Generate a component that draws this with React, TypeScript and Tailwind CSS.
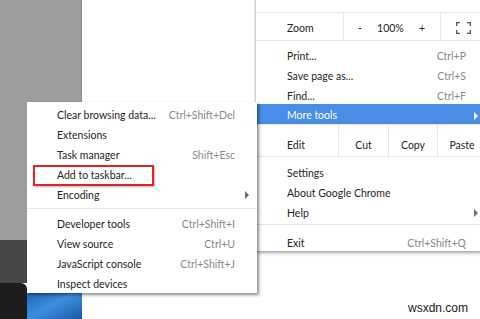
import React from "react";

const font = { fontFamily: "Lato, 'Noto Sans', sans-serif" };

const Arrow = ({ white = false }: { white?: boolean }) => (
  <span
    className={`inline-block w-0 h-0 border-y-[4px] border-y-transparent border-l-[4px] ${
      white ? "border-l-white" : "border-l-[#707070]"
    }`}
  />
);

type Item = { label: string; shortcut?: string; arrow?: boolean };

const subTop: Item[] = [
  { label: "Clear browsing data...", shortcut: "Ctrl+Shift+Del" },
  { label: "Extensions" },
  { label: "Task manager", shortcut: "Shift+Esc" },
  { label: "Add to taskbar..." },
  { label: "Encoding", arrow: true },
];

const subBottom: Item[] = [
  { label: "Developer tools", shortcut: "Ctrl+Shift+I" },
  { label: "View source", shortcut: "Ctrl+U" },
  { label: "JavaScript console", shortcut: "Ctrl+Shift+J" },
  { label: "Inspect devices" },
];

const SubRow = ({ item }: { item: Item }) => (
  <div className="h-[20px] flex items-center justify-between pl-[30px] pr-[22px] pt-[4px] relative">
    <span>{item.label}</span>
    {item.shortcut && <span className="text-[#8a8a8a]">{item.shortcut}</span>}
    {item.arrow && (
      <span className="absolute right-[8px] top-[7px] flex">
        <Arrow />
      </span>
    )}
  </div>
);

const MainRow = ({ item }: { item: Item }) => (
  <div className="h-[20px] flex items-center justify-between pl-[31px] pr-[20px] pt-[6px] relative">
    <span>{item.label}</span>
    {item.shortcut && <span className="text-[#8a8a8a]">{item.shortcut}</span>}
    {item.arrow && (
      <span className="absolute right-[8px] top-[8px] flex">
        <Arrow />
      </span>
    )}
  </div>
);

const FullscreenIcon = () => (
  <svg width="15" height="12" viewBox="0 0 15 12" fill="none" stroke="#555" strokeWidth="1.3">
    <path d="M0.7 4V0.7H4" />
    <path d="M11 0.7H14.3V4" />
    <path d="M14.3 8V11.3H11" />
    <path d="M4 11.3H0.7V8" />
  </svg>
);

const App: React.FC = () => {
  return (
    <div
      className="relative w-[480px] h-[319px] overflow-hidden bg-white flex text-[10.5px] text-[#262626]"
      style={font}
    >
      {/* background page */}
      <div className="w-[82px] flex flex-col">
        <div className="h-[240px] bg-[#9e9e9e] border-r border-[#8c8c8c]" />
        <div className="h-[43px] bg-[#474747]" />
        <div className="flex-1 flex">
          <div className="w-[27px] bg-[#1d1d1d] rounded-tr-[6px]" />
          <div className="flex-1 bg-gradient-to-br from-[#1e5fb4] via-[#3d8fe0] to-[#165aa8] mt-[6px]" />
        </div>
      </div>
      <div className="flex-1 flex items-end justify-end pr-[12px] pb-[2px]">
        <span className="text-[12px] text-[#1a1a1a]" style={{ fontFamily: "'Liberation Sans', Arial, sans-serif" }}>
          wsxdn.com
        </span>
      </div>

      {/* main chrome menu */}
      <div className="absolute left-[255px] top-[-10px] w-[231px] bg-white border-l border-[#cfcfcf] shadow-[1px_2px_3px_rgba(0,0,0,0.35)]">
        <div className="h-[20px] flex items-end pl-[31px] pb-[9px]">
          <span className="leading-none">Downloads</span>
        </div>
        <div className="h-px bg-[#e6e6e6] mt-[2px]" />
        <div className="h-[28px] flex items-center border-b border-[#e6e6e6]">
          <div className="w-[87px] h-full pl-[31px] pt-[5px] flex items-center">Zoom</div>
          <div className="w-[97px] h-full border-l border-[#e6e6e6] flex items-center justify-between pl-[14px] pr-[15px] pt-[5px]">
            <span>-</span>
            <span>100%</span>
            <span>+</span>
          </div>
          <div className="flex-1 h-full border-l border-[#e6e6e6] flex items-center justify-center pt-[2px]">
            <FullscreenIcon />
          </div>
        </div>
        <div className="pt-[3px]">
          <MainRow item={{ label: "Print...", shortcut: "Ctrl+P" }} />
          <MainRow item={{ label: "Save page as...", shortcut: "Ctrl+S" }} />
          <MainRow item={{ label: "Find...", shortcut: "Ctrl+F" }} />
          <div className="h-[20px] flex items-center justify-between pl-[31px] pr-[8px] pt-[3px] bg-[#4a8de6] text-white">
            <span>More tools</span>
            <Arrow white />
          </div>
        </div>
        <div className="h-[33px] flex border-y border-[#e6e6e6] pt-[10px]">
          <div className="w-[82px] pl-[31px] flex items-center">Edit</div>
          <div className="w-[50px] border-l border-[#e6e6e6] flex items-center justify-center -mt-[10px] pt-[10px]">Cut</div>
          <div className="w-[49px] border-l border-[#e6e6e6] flex items-center justify-center -mt-[10px] pt-[10px]">Copy</div>
          <div className="flex-1 border-l border-[#e6e6e6] flex items-center justify-center -mt-[10px] pt-[10px]">Paste</div>
        </div>
        <div className="pt-[4px]">
          <MainRow item={{ label: "Settings" }} />
          <MainRow item={{ label: "About Google Chrome" }} />
          <MainRow item={{ label: "Help", arrow: true }} />
        </div>
        <div className="h-px bg-[#e6e6e6] mt-[3px] mb-[6px]" />
        <MainRow item={{ label: "Exit", shortcut: "Ctrl+Shift+Q" }} />
      </div>

      {/* more tools submenu */}
      <div className="absolute left-[27px] top-[102px] w-[230px] bg-white pt-[2px] shadow-[2px_2px_3px_rgba(0,0,0,0.45)] z-10">
        {subTop.map((item) => (
          <SubRow key={item.label} item={item} />
        ))}
        <div className="h-px bg-[#e6e6e6] my-[4px]" />
        {subBottom.map((item) => (
          <SubRow key={item.label} item={item} />
        ))}
        <div className="absolute left-[6px] top-[63px] w-[121px] h-[21px] border-2 border-[#d8262b] shadow-[1px_1px_2px_rgba(0,0,0,0.3)]" />
      </div>
    </div>
  );
};

export default App;
